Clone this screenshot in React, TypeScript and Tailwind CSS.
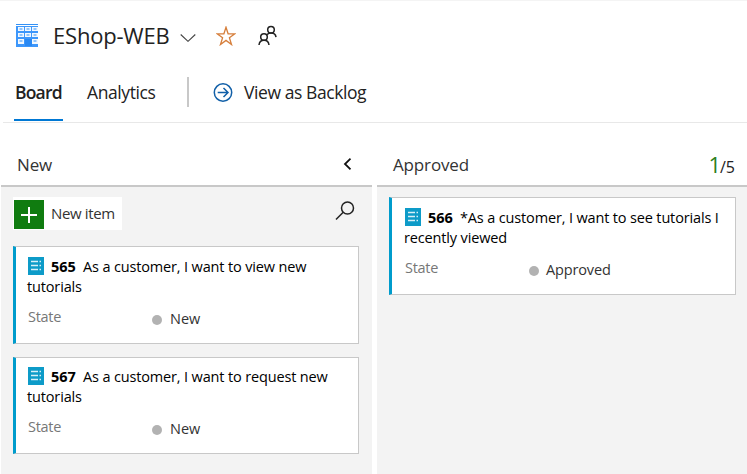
import React from "react";

function BuildingIcon() {
  return (
    <svg className="mb-[2px] h-[23px] w-[22px] shrink-0" viewBox="0 0 22 23">
      <rect width="22" height="1" fill="#3391f5" />
      <rect y="2" width="22" height="21" fill="#3d97fb" />
      {[3, 9, 15].map((y) =>
        [2, 9, 16].map((x) =>
          y === 15 && x === 9 ? null : (
            <g key={`${x}-${y}`}>
              <rect x={x} y={y} width="6" height={y === 15 ? 5 : 4} fill="#f2f8ff" />
              <rect x={x + 1.5} y={y + 1.5} width="3" height="1" fill="#3391f5" />
            </g>
          ),
        ),
      )}
      <rect x="9" y="15" width="7" height="7" fill="#2888f3" />
    </svg>
  );
}

function ItemIcon() {
  return (
    <svg className="mr-[7px] h-[18px] w-4 shrink-0" viewBox="0 0 16 18">
      <rect width="16" height="18" fill="#0d9bc8" />
      <path d="M3 4.500h7M3 8.500h7M3 12.500h7M11.500 4.500h1.500M11.500 8.500h1.500M11.500 12.500h1.500" stroke="#d8f0f8" strokeWidth="1.3" />
    </svg>
  );
}

type CardProps = {
  id: string;
  first: React.ReactNode;
  second: React.ReactNode;
  state: React.ReactNode;
  className: string;
};

function Card({ id, first, second, state, className }: CardProps) {
  return (
    <article className={`border border-l-[3px] border-[#c8c8c8] border-l-[#009ccc] bg-white text-[14.5px] text-black ${className}`}>
      <div className="flex h-5 items-center whitespace-nowrap pl-px">
        <ItemIcon />
        <span className="mr-[7px] w-[25px] pt-0.5 font-bold">{id}</span>
        <span className="pt-0.5 tracking-[-0.15px]">{first}</span>
      </div>
      <div className="flex h-5 items-center pt-0.5 whitespace-nowrap tracking-[-0.15px]">{second}</div>
      <div className="mt-[10px] flex h-6 pl-px">
        <span className="w-[124px] leading-[22px] tracking-[-0.3px] text-[#777]">State</span>
        <span className="mt-[9px] mr-2 size-2.5 rounded-full bg-[#b2b2b2]" />
        <span className="leading-[26px] text-[#333]">{state}</span>
      </div>
    </article>
  );
}

export default function App() {
  return (
    <div className="flex h-[474px] w-[747px] flex-col overflow-hidden border-t border-[#f4f4f4] bg-white font-['Open_Sans','Noto_Sans',sans-serif] text-[#222]">
      <header className="flex h-[70px] items-center pl-4">
        <BuildingIcon />
        <h1 className="mb-[2px] ml-[15px] w-[118px] whitespace-nowrap text-[22px] leading-8 tracking-[-0.2px]">EShop-WEB</h1>
        <svg className="mt-1 ml-[9px] h-2 w-4" viewBox="0 0 16 8" fill="none" stroke="#444" strokeWidth="1.1">
          <path d="M.7.5 8 7.3 15.3.5" />
        </svg>
        <svg className="ml-5 h-5 w-5" viewBox="0 0 20 20" fill="none" stroke="#d67f3c" strokeWidth="1.3">
          <path d="m10 1.2 2.1 6.6h6.8l-5.5 4 2.1 6.7-5.5-4.1-5.5 4.1 2.1-6.7-5.5-4h6.8Z" />
        </svg>
        <svg className="mb-[2px] ml-[21px] h-5 w-5" viewBox="0 0 20 20" fill="none" stroke="#222" strokeWidth="1.5">
          <circle cx="14" cy="4.800" r="3.300" />
          <circle cx="7" cy="12" r="3.300" />
          <path d="M2 20c.3-2.800 2.300-4.700 5-4.700s4.700 1.900 5 4.700M10 9.600c1-1 2.300-1.500 4-1.500 2.800 0 4.700 1.600 5 4" />
        </svg>
      </header>
      <nav className="ml-[3px] flex h-[52px] items-start border-b border-[#e8e8e8] pl-[11px] text-[17.5px] whitespace-nowrap">
        <div className="h-[50px] w-[49px] border-b-2 border-[#0078d4] pt-2 pl-px font-semibold leading-[26px] tracking-[-0.8px]">Board</div>
        <div className="ml-6 w-[100px] pt-2 leading-[26px] tracking-[-0.4px]">Analytics</div>
        <div className="mt-1.5 h-[30px] w-0.5 bg-[#c8c8c8]" />
        <svg className="mt-3 ml-6 h-5 w-5" viewBox="0 0 20 20" fill="none" stroke="#1260a8" strokeWidth="1.5">
          <circle cx="10" cy="9.500" r="8.700" />
          <path d="M4.700 9.500h10M10.500 5l4.500 4.500-4.500 4.500" />
        </svg>
        <div className="ml-[11px] pt-2 leading-[26px] tracking-[-0.42px]">View as Backlog</div>
      </nav>
      <main className="flex flex-1 gap-[5px] pl-px">
        <section className="flex w-[371px] flex-col">
          <div className="flex h-16 items-center justify-between border-b-2 border-[#c8c8c8] pt-[20px] pr-5 pl-4">
            <h2 className="pt-0.5 text-[17px] tracking-[-0.15px] text-[#333]">New</h2>
            <svg className="h-3 w-[9px]" viewBox="0 0 9 12" fill="none" stroke="#111" strokeWidth="1.800">
              <path d="M7.500.7 2 6l5.500 5.300" />
            </svg>
          </div>
          <div className="flex-1 bg-[#f3f3f3] pt-2.5 pr-[13px] pl-3">
            <div className="flex h-[33px] items-start justify-between">
              <button className="flex h-[33px] w-[109px] items-center bg-white pl-px whitespace-nowrap">
                <svg className="mt-px h-[29px] w-[30px]" viewBox="0 0 30 29">
                  <rect width="30" height="29" fill="#107c10" />
                  <path d="M7 15h16M15 7v16" stroke="white" strokeWidth="2" />
                </svg>
                <span className="ml-[7px] text-[15px] tracking-[-0.35px] text-[#333]">New item</span>
              </button>
              <svg className="mt-1 mr-1 h-5 w-5" viewBox="0 0 20 20" fill="none" stroke="#222" strokeWidth="1.500">
                <circle cx="12.500" cy="7" r="6" />
                <path d="M8.200 11.300 1 18.500" />
              </svg>
            </div>
            <Card
              id="565"
              className="mt-4 h-[98px] pt-[9px] pl-[11px]"
              first="As a customer, I want to view new"
              second="tutorials"
              state="New"
            />
            <Card
              id="567"
              className="mt-[13px] h-[97px] pt-2 pl-[11px]"
              first="As a customer, I want to request new"
              second="tutorials"
              state="New"
            />
          </div>
        </section>
        <section className="flex flex-1 flex-col">
          <div className="flex h-16 items-center justify-between border-b-2 border-[#c8c8c8] pt-[20px] pr-3 pl-4">
            <h2 className="pt-0.5 text-[17px] tracking-[-0.15px] text-[#333]">Approved</h2>
            <div className="flex items-baseline text-[16px] text-[#222]">
              <span className="text-[22px] leading-7 tracking-[-1px] text-[#2c7f1c]">1</span>
              <span>/5</span>
            </div>
          </div>
          <div className="flex-1 bg-[#f3f3f3] pt-2.5 pr-[11px] pl-3">
            <Card
              id="566"
              className="h-[98px] pt-[9px] pl-3"
              first="*As a customer, I want to see tutorials I"
              second="recently viewed"
              state={<span className="-ml-px tracking-[-0.15px]">Approved</span>}
            />
          </div>
        </section>
      </main>
    </div>
  );
}
